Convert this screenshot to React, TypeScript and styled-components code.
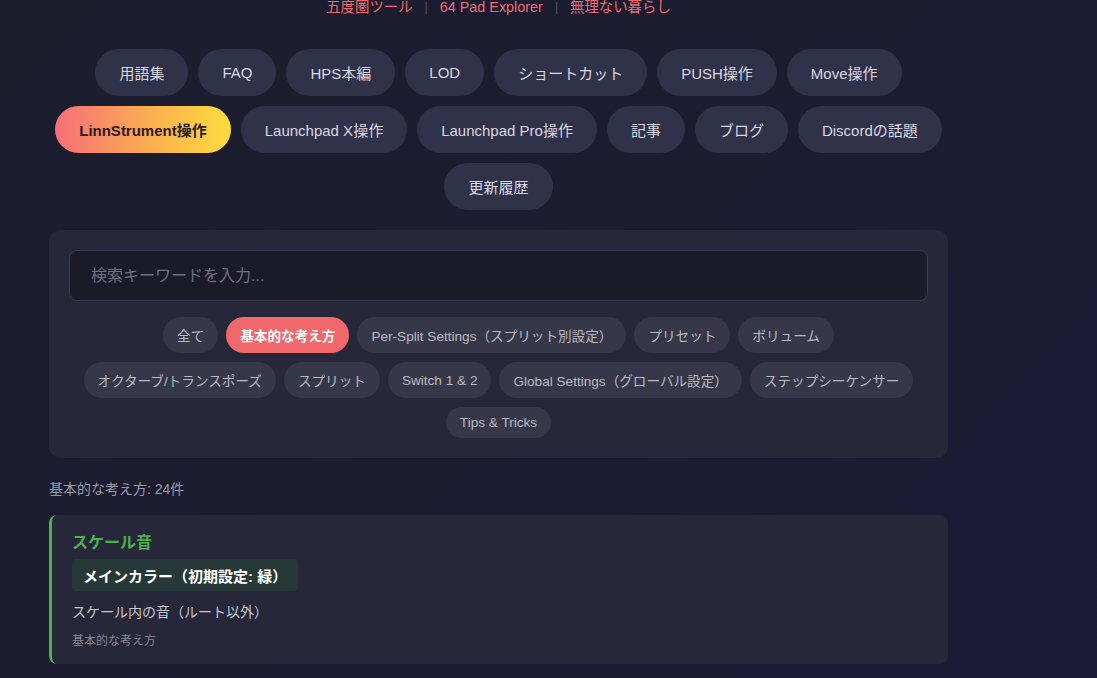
import styled, { createGlobalStyle } from "styled-components";

const GlobalStyle = createGlobalStyle`
  html, body {
    margin: 0;
    padding: 0;
    height: 100%;
  }
  body {
    background: linear-gradient(135deg, #1c1d2d 0%, #1b1c31 55%, #1c1a37 100%);
    background-attachment: fixed;
    color: #e0e0e0;
    font-family: "Liberation Sans", "Noto Sans CJK JP", sans-serif;
    overflow: hidden;
  }
`;

const navItems = [
  ["用語集", "FAQ", "HPS本編", "LOD", "ショートカット", "PUSH操作", "Move操作"],
  ["LinnStrument操作", "Launchpad X操作", "Launchpad Pro操作", "記事", "ブログ", "Discordの話題"],
  ["更新履歴"],
];

const filters = [
  "全て",
  "基本的な考え方",
  "Per-Split Settings（スプリット別設定）",
  "プリセット",
  "ボリューム",
  "オクターブ/トランスポーズ",
  "スプリット",
  "Switch 1 & 2",
  "Global Settings（グローバル設定）",
  "ステップシーケンサー",
  "Tips & Tricks",
];

function App() {
  const activeNav = "LinnStrument操作";
  const activeFilter = "基本的な考え方";

  return (
    <Page>
      <GlobalStyle />
      <Container>
        <TopLinks>
          <TopLink>五度圏ツール</TopLink>
          <Sep>|</Sep>
          <TopLink>64 Pad Explorer</TopLink>
          <Sep>|</Sep>
          <TopLink>無理ない暮らし</TopLink>
        </TopLinks>

        <Nav>
          {navItems.map((row, i) => (
            <NavRow key={i}>
              {row.map((item) => (
                <NavPill key={item} $active={item === activeNav}>
                  {item}
                </NavPill>
              ))}
            </NavRow>
          ))}
        </Nav>

        <SearchPanel>
          <SearchInput placeholder="検索キーワードを入力..." />
          <FilterList>
            {filters.map((f) => (
              <FilterChip key={f} $active={f === activeFilter}>
                {f}
              </FilterChip>
            ))}
          </FilterList>
        </SearchPanel>

        <ResultCount>基本的な考え方: 24件</ResultCount>

        <Card>
          <CardTitle>スケール音</CardTitle>
          <ColorBadge>メインカラー（初期設定: 緑）</ColorBadge>
          <CardText>スケール内の音（ルート以外）</CardText>
          <CardCategory>基本的な考え方</CardCategory>
        </Card>
        <Card />
      </Container>
    </Page>
  );
}

const Page = styled.div`
  padding: 0 49px;
  min-height: 100vh;
`;

const Container = styled.div`
  width: 899px;
`;

const TopLinks = styled.div`
  display: flex;
  justify-content: center;
  align-items: center;
  gap: 12px;
  font-size: 14.4px;
  line-height: 17px;
  margin-top: -1px;
`;

const TopLink = styled.span`
  color: #ef6b73;
`;

const Sep = styled.span`
  color: #55586a;
  font-size: 12px;
`;

const Nav = styled.nav`
  display: flex;
  flex-direction: column;
  gap: 10px;
  margin-top: 33px;
`;

const NavRow = styled.div`
  display: flex;
  justify-content: center;
  gap: 10px;
`;

const NavPill = styled.button<{ $active?: boolean }>`
  font-family: inherit;
  font-size: 15px;
  padding: 13px 24px;
  border: none;
  border-radius: 24px;
  cursor: pointer;
  background: ${(p) =>
    p.$active ? "linear-gradient(90deg, #f66e78 0%, #fbb04f 55%, #fddb3d 100%)" : "#30324a"};
  color: ${(p) => (p.$active ? "#2b1a24" : "#d8d8e0")};
  font-weight: ${(p) => (p.$active ? 700 : 400)};
`;

const SearchPanel = styled.section`
  margin-top: 20px;
  background: #262839;
  border-radius: 12px;
  padding: 20px;
`;

const SearchInput = styled.input`
  box-sizing: border-box;
  width: 100%;
  height: 51px;
  padding: 0 21px;
  font-family: inherit;
  font-size: 16px;
  color: #ddd;
  background: #1a1a28;
  border: 1px solid #3a3c50;
  border-radius: 8px;
  outline: none;

  &::placeholder {
    color: #6f7080;
  }
`;

const FilterList = styled.div`
  display: flex;
  flex-wrap: wrap;
  justify-content: center;
  gap: 9px 8px;
  margin-top: 16px;
  padding: 0 12px;
`;

const FilterChip = styled.button<{ $active?: boolean }>`
  font-family: inherit;
  font-size: 13.6px;
  padding: 8px 14px;
  border: none;
  border-radius: 18px;
  cursor: pointer;
  background: ${(p) => (p.$active ? "#f0686c" : "#363849")};
  color: ${(p) => (p.$active ? "#ffffff" : "#b9bac4")};
  font-weight: ${(p) => (p.$active ? 700 : 400)};
`;

const ResultCount = styled.div`
  margin-top: 20px;
  font-size: 14px;
  color: #9a9ba6;
`;

const Card = styled.article`
  margin-top: 17px;
  background: #262839;
  border-left: 3px solid #4caf50;
  border-radius: 8px;
  padding: 14px 20px 16px;
  min-height: 40px;
`;

const CardTitle = styled.h3`
  margin: 0;
  font-size: 16px;
  font-weight: 700;
  color: #4caf50;
`;

const ColorBadge = styled.div`
  display: inline-block;
  margin-top: 6px;
  padding: 5.5px 11px;
  background: #263837;
  border-radius: 4px;
  color: #ffffff;
  font-size: 15px;
  font-weight: 700;
`;

const CardText = styled.p`
  margin: 10px 0 0;
  font-size: 14px;
  color: #c6c7cf;
`;

const CardCategory = styled.div`
  margin-top: 10px;
  font-size: 12px;
  color: #868794;
`;

export default App;
